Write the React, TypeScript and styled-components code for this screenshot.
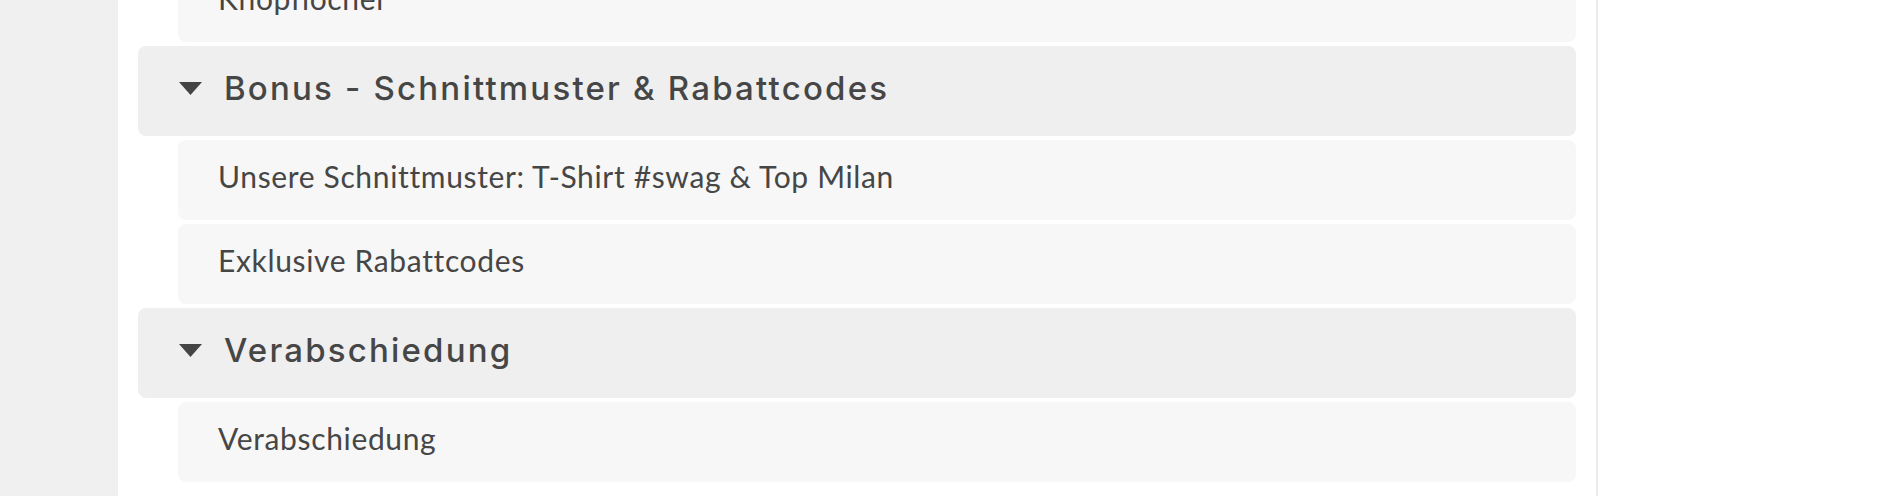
import React from "react";
import styled, { createGlobalStyle } from "styled-components";

const GlobalStyle = createGlobalStyle`
  html, body {
    margin: 0;
    padding: 0;
    background: #ffffff;
    font-family: Lato, "Noto Sans", sans-serif;
    color: #464646;
    overflow: hidden;
  }
  * { box-sizing: border-box; }
`;

const Page = styled.div`
  display: flex;
  height: 496px;
  overflow: hidden;
`;

const Sidebar = styled.aside`
  width: 118px;
  flex: 0 0 118px;
  background: #f0f0f0;
`;

const Main = styled.main`
  width: 1480px;
  flex: 0 0 1480px;
  padding: 0 20px;
  border-right: 2px solid #ececec;
  overflow: hidden;
`;

const Curriculum = styled.div`
  display: flex;
  flex-direction: column;
  gap: 4px;
  margin-top: -38px;
`;

const SectionHeader = styled.div`
  display: flex;
  align-items: center;
  gap: 22px;
  height: 90px;
  padding-left: 41px;
  background: #efefef;
  border-radius: 8px;
`;

const SectionTitle = styled.span`
  font-family: Inter, Lato, sans-serif;
  font-size: 33px;
  font-weight: 500;
  letter-spacing: 2.2px;
  color: #464646;
  line-height: 1;
  margin-top: -6px;
`;

const Caret = styled.svg`
  width: 23px;
  height: 13px;
  flex: 0 0 23px;
  margin-top: -5px;
`;

const LessonRow = styled.div`
  display: flex;
  align-items: center;
  height: 80px;
  margin-left: 40px;
  padding-left: 40px;
  background: #f7f7f7;
  border-radius: 8px;
`;

const LessonTitle = styled.span`
  font-size: 30px;
  font-weight: 400;
  letter-spacing: 0.65px;
  color: #464646;
  line-height: 1;
  margin-top: -9px;
`;

type Section = { title: string; lessons: string[] };

const sections: Section[] = [
  { title: "Bonus - Schnittmuster & Rabattcodes", lessons: ["Unsere Schnittmuster: T-Shirt #swag & Top Milan", "Exklusive Rabattcodes"] },
  { title: "Verabschiedung", lessons: ["Verabschiedung"] },
];

const Header: React.FC<{ title: string }> = ({ title }) => (
  <SectionHeader>
    <Caret viewBox="0 0 23 13">
      <polygon points="0,0 23,0 11.5,13" fill="#444444" />
    </Caret>
    <SectionTitle>{title}</SectionTitle>
  </SectionHeader>
);

export default function App() {
  return (
    <>
      <GlobalStyle />
      <Page>
        <Sidebar />
        <Main>
          <Curriculum>
            <LessonRow>
              <LessonTitle>Knopflöcher</LessonTitle>
            </LessonRow>
            {sections.map((s) => (
              <React.Fragment key={s.title}>
                <Header title={s.title} />
                {s.lessons.map((l) => (
                  <LessonRow key={l}>
                    <LessonTitle>{l}</LessonTitle>
                  </LessonRow>
                ))}
              </React.Fragment>
            ))}
          </Curriculum>
        </Main>
      </Page>
    </>
  );
}
